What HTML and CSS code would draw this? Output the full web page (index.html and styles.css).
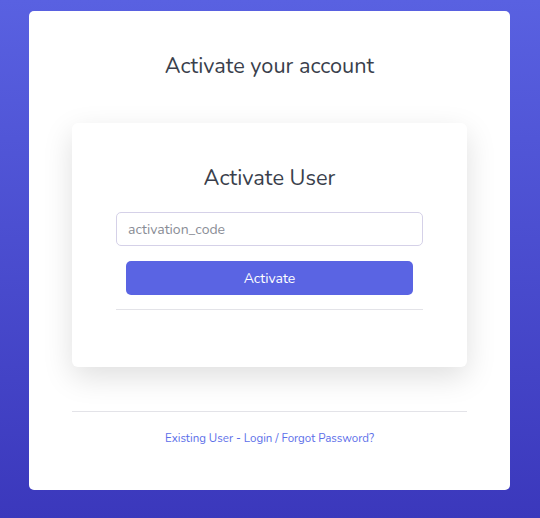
FILE: index.html
```html
<!DOCTYPE html>
<html>
<head>
<meta charset="utf-8">
<link rel="stylesheet" href="styles.css">
</head>
<body>
<div class="page">
  <div class="card">
    <h1 class="title">Activate your account</h1>
    <div class="panel">
      <h2 class="panel-title">Activate User</h2>
      <input class="field" type="text" placeholder="activation_code">
      <button class="btn">Activate</button>
      <hr class="rule">
    </div>
    <hr class="rule rule-outer">
    <p class="links"><a href="#">Existing User - Login</a> / <a href="#">Forgot Password?</a></p>
  </div>
</div>
</body>
</html>
```
FILE: styles.css
```css
html, body {
  margin: 0;
  height: 100%;
}
body {
  background: linear-gradient(180deg, #5961e1 0%, #3b38bc 100%);
  font-family: "Nunito", "Lato", "Open Sans", sans-serif;
  color: #3a3f4c;
}
.page {
  padding: 11px 30px 0 29px;
}
.card {
  background: #fff;
  border-radius: 5px;
  height: 479px;
  box-sizing: border-box;
  padding: 0 43px;
  display: flex;
  flex-direction: column;
}
.title {
  margin: 0;
  padding-top: 40px;
  font-size: 21.7px;
  line-height: 30px;
  font-weight: 400;
  text-align: center;
}
.panel {
  margin-top: 42px;
  background: #fff;
  border-radius: 6px;
  box-shadow: 0 10px 30px rgba(0, 0, 0, 0.13);
  padding: 40px 44px 57px;
  display: flex;
  flex-direction: column;
}
.panel-title {
  margin: 0;
  font-size: 21.8px;
  line-height: 30px;
  font-weight: 400;
  text-align: center;
}
.field {
  margin-top: 19px;
  height: 34px;
  box-sizing: border-box;
  border: 1px solid #d5d1e8;
  border-radius: 5px;
  padding: 0 11px;
  font-family: inherit;
  font-size: 14px;
  color: #3a3f4c;
  outline: none;
}
.field::placeholder {
  color: #8a8d96;
}
.btn {
  margin: 15px 10px 0;
  height: 34px;
  border: none;
  border-radius: 5px;
  background: #5a64e3;
  color: #fff;
  font-family: inherit;
  font-size: 14px;
}
.rule {
  margin: 14px 0 0;
  border: 0;
  border-top: 1px solid #e3e3e8;
}
.rule-outer {
  margin-top: 44px;
}
.links {
  margin: 18px 0 0;
  font-size: 11.5px;
  line-height: 16px;
  text-align: center;
  color: #5b6ee9;
}
.links a {
  color: #5b6ee9;
  text-decoration: none;
}
```
